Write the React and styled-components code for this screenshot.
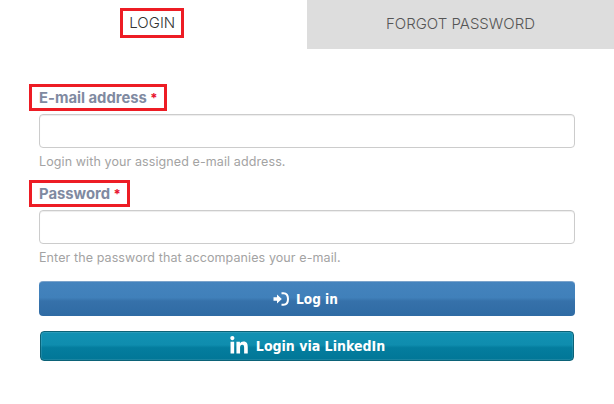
import React from "react";
import styled, { createGlobalStyle } from "styled-components";
import { FaLinkedinIn } from "react-icons/fa";

const GlobalStyle = createGlobalStyle`
    html, body {
        margin: 0;
        padding: 0;
        background: #fff;
        font-family: "Inter", "Open Sans", sans-serif;
    }
    * {
        box-sizing: border-box;
    }
`;

function LoginIcon() {
    return (
        <svg width="16" height="14" viewBox="0 0 16 14" fill="none">
            <path d="M0.5 5.2H4V2.4L8.8 7L4 11.6V8.8H0.5Z" fill="#fff" />
            <path
                d="M8.5 1.2H10.5C13.5 1.2 15 3.5 15 7C15 10.5 13.5 12.8 10.5 12.8H8.5"
                stroke="#fff"
                strokeWidth="2"
            />
        </svg>
    );
}

function App() {
    return (
        <>
            <GlobalStyle />
            <Page>
                <Tabs>
                    <Tab active>
                        <Marked>LOGIN</Marked>
                    </Tab>
                    <Tab>FORGOT PASSWORD</Tab>
                </Tabs>
                <Form>
                    <Field>
                        <Label>
                            E-mail address <Star>*</Star>
                        </Label>
                        <Input type="text" />
                        <Help>Login with your assigned e-mail address.</Help>
                    </Field>
                    <Field>
                        <Label>
                            Password <Star>*</Star>
                        </Label>
                        <Input type="password" />
                        <Help>Enter the password that accompanies your e-mail.</Help>
                    </Field>
                    <SubmitButton type="button">
                        <LoginIcon />
                        Log in
                    </SubmitButton>
                    <LinkedinButton type="button">
                        <FaLinkedinIn size={20} />
                        Login via LinkedIn
                    </LinkedinButton>
                </Form>
            </Page>
        </>
    );
}

export default App;

const Page = styled.div`
    width: 614px;
    height: 404px;
    overflow: hidden;
`;
const Tabs = styled.div`
    display: flex;
    height: 49px;
`;
const Tab = styled.div`
    width: 50%;
    display: flex;
    align-items: center;
    justify-content: center;
    padding-bottom: 3px;
    font-size: 15px;
    font-weight: 300;
    color: ${(props) => (props.active ? "#333" : "#555")};
    background: ${(props) => (props.active ? "#fff" : "#dddddd")};
`;
const Marked = styled.span`
    display: block;
    height: 30px;
    line-height: 24px;
    margin-right: 3px;
    padding: 0 5.5px 0 6px;
    border: 3px solid #ed1c24;
`;
const Form = styled.form`
    padding: 35px 39px 0;
`;
const Field = styled.div`
    margin-bottom: 10px;
`;
const Label = styled.label`
    display: block;
    width: fit-content;
    height: 27px;
    margin: 0 0 3px -10px;
    padding: 1px 6.5px 0 7px;
    border: 3px solid #ed1c24;
    font-size: 14.8px;
    line-height: 21px;
    font-weight: 700;
    color: #7f8aa1;
`;
const Star = styled.span`
    font-size: 13px;
    color: #e8112d;
`;
const Input = styled.input`
    display: block;
    width: 100%;
    height: 34px;
    padding: 6px 12px;
    border: 1px solid #cccccc;
    border-radius: 4px;
    background: #fff;
    box-shadow: inset 0 1px 1px rgba(0, 0, 0, 0.075);
`;
const Help = styled.p`
    margin: 5px 0 0;
    font-size: 12.5px;
    line-height: 17px;
    letter-spacing: 0.1px;
    color: #a3a3a3;
`;
const SubmitButton = styled.button`
    display: flex;
    align-items: center;
    justify-content: center;
    gap: 7px;
    width: 100%;
    height: 35px;
    margin-top: 15px;
    padding: 0 3px 0 0;
    border: 0;
    border-top: 1px solid #7ba3cb;
    border-radius: 4px;
    background: linear-gradient(to bottom, #4483bd 0%, #4080ba 46%, #3671aa 56%, #2f6ba4 100%);
    color: #fff;
    font-family: "DejaVu Sans Condensed", "DejaVu Sans", sans-serif;
    font-stretch: condensed;
    font-size: 13.5px;
    font-weight: 700;
`;
const LinkedinButton = styled.button`
    display: flex;
    align-items: center;
    justify-content: center;
    gap: 7px;
    width: 534px;
    height: 30px;
    margin: 15px 0 0 1px;
    border: 1px solid #0b6277;
    border-radius: 4px;
    background: linear-gradient(to bottom, #1191b3 0%, #0f8dae 46%, #047d9e 56%, #017797 100%);
    box-shadow: inset 0 0 0 1px rgba(255, 255, 255, 0.1);
    color: #fff;
    font-family: "DejaVu Sans Condensed", "DejaVu Sans", sans-serif;
    font-stretch: condensed;
    font-size: 14px;
    font-weight: 700;
`;
